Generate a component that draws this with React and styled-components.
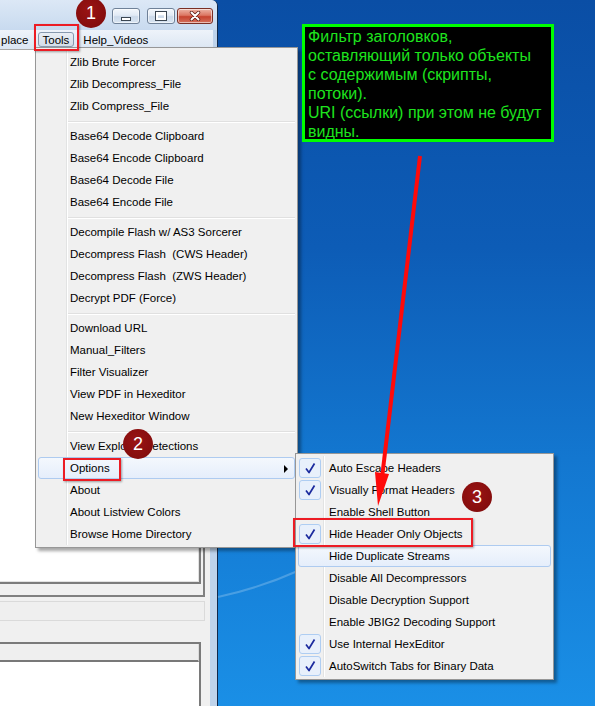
import React from 'react'
import styled, { createGlobalStyle } from 'styled-components'

const GlobalStyle = createGlobalStyle`
  html, body { margin: 0; padding: 0; overflow: hidden; }
  body { font-family: "Liberation Sans", Arial, sans-serif; }
`

const Desktop = styled.div`
  position: relative;
  width: 595px;
  height: 706px;
  overflow: hidden;
  display: flex;
  background: linear-gradient(180deg, #0a4ea5 0%, #0d5cb6 35%, #1377d0 65%, #1a8fe6 100%);
`

const Streak = styled.svg`
  position: absolute;
  left: 0;
  top: 0;
  pointer-events: none;
`

/* ---------- app window ---------- */

const Window = styled.div`
  width: 217px;
  height: 100%;
  display: flex;
  flex-direction: column;
  background: #bed3eb;
  border-right: 1px solid #12294a;
  border-top-right-radius: 6px;
`

const TitleBar = styled.div`
  height: 30px;
  box-sizing: border-box;
  padding: 8px 4px 0 0;
  display: flex;
  justify-content: flex-end;
  align-items: flex-start;
  background: linear-gradient(180deg, #dce8f6 0%, #c8daef 100%);
  border-top-right-radius: 6px;
`

const CaptionButton = styled.div`
  width: ${p => p.$w}px;
  height: 16px;
  margin-left: ${p => p.$gap}px;
  box-sizing: border-box;
  border: 1px solid ${p => (p.$close ? '#7a2f25' : '#6f8198')};
  border-radius: 3px;
  display: flex;
  align-items: center;
  justify-content: center;
  background: ${p =>
    p.$close
      ? 'linear-gradient(180deg,#ecb4a6 0%,#dc7763 45%,#c6432f 55%,#d4715d 100%)'
      : 'linear-gradient(180deg,#f3f7fc 0%,#e1eaf5 45%,#cbd9ea 55%,#d9e5f2 100%)'};
  box-shadow: inset 0 0 0 1px rgba(255, 255, 255, 0.55);
`

const MinGlyph = styled.div`
  width: 8px;
  height: 2px;
  margin-top: 5px;
  background: #fff;
  border: 1px solid #3b4652;
`

const MaxGlyph = styled.div`
  width: 6px;
  height: 3px;
  box-sizing: content-box;
  border: 2px solid #fff;
  border-top-width: 3px;
  outline: 1px solid #3b4652;
`

const MenuBar = styled.div`
  height: 19px;
  margin-right: 4px;
  display: flex;
  align-items: center;
  font-size: 11.5px;
  color: #000;
  background: linear-gradient(180deg, #eef3fa 0%, #dbe6f3 100%);
`

const MenuBarItem = styled.div`
  height: 15px;
  display: flex;
  align-items: center;
  box-sizing: border-box;
  margin-left: ${p => p.$gap}px;
  padding: 0 ${p => (p.$open ? 4 : 0)}px;
  border: 1px solid ${p => (p.$open ? '#8799ae' : 'transparent')};
  border-radius: 3px;
  background: ${p => (p.$open ? 'linear-gradient(180deg,#e9eef4,#d3dde8)' : 'transparent')};
`

const Body = styled.div`
  flex: 1;
  display: flex;
  margin-right: 7px;
  background: #f0f0f0;
`

const MainColumn = styled.div`
  width: 205px;
  display: flex;
  flex-direction: column;
`

const GroupBox = styled.div`
  height: 548px;
  box-sizing: border-box;
  display: flex;
  padding: 0 2px 11px 0;
  border-top: 1px solid #a9a9a9;
  border-right: 2px solid #808080;
  border-bottom: 2px solid #808080;
`

const WhitePanel = styled.div`
  flex: 1;
  background: #fff;
  border-right: 2px solid #7c7c7c;
  border-bottom: 2px solid #7c7c7c;
  box-shadow: inset -1px -1px 0 #e2e2e2;
`

const StatusField = styled.div`
  margin-top: 4px;
  height: 18px;
  background: #efefef;
  border: 1px solid #dadada;
  border-left: none;
`

const ListPanel = styled.div`
  margin-top: 21px;
  width: 199px;
  flex: 1;
  display: flex;
  flex-direction: column;
  border-top: 2px solid #7a7a7a;
  border-right: 2px solid #7a7a7a;
`

const ListHeader = styled.div`
  height: 16px;
  background: #efefef;
  border-bottom: 2px solid #787878;
  border-right: 1px solid #dcdcdc;
`

const ListBody = styled.div`
  flex: 1;
  background: #fff;
`

/* ---------- popup menus ---------- */

const Menu = styled.div`
  position: absolute;
  left: ${p => p.$x}px;
  top: ${p => p.$y}px;
  width: ${p => p.$w}px;
  box-sizing: border-box;
  padding: 3px 2px 2px 2px;
  background: #f0f0f0;
  border: 1px solid #979797;
  box-shadow: 3px 3px 3px rgba(0, 0, 0, 0.35);
  font-size: 11.5px;
  color: #000;

  &::before {
    content: '';
    position: absolute;
    top: 2px;
    bottom: 2px;
    left: ${p => p.$gutter}px;
    width: 1px;
    background: #e2e3e3;
    box-shadow: 1px 0 0 #fff;
  }
`

const Item = styled.div`
  position: relative;
  height: 22px;
  box-sizing: border-box;
  display: flex;
  align-items: center;
  padding-left: ${p => p.$indent}px;
  white-space: pre;
  border: 1px solid ${p => (p.$hot ? '#aecbf0' : 'transparent')};
  border-radius: 3px;
  background: ${p => (p.$hot ? 'linear-gradient(180deg,#f4f8fd 0%,#e5eefb 100%)' : 'transparent')};
`

const Separator = styled.div`
  height: 8px;
  display: flex;
  align-items: center;
  padding-left: ${p => p.$indent}px;

  &::after {
    content: '';
    flex: 1;
    height: 1px;
    background: #e0e0e0;
    box-shadow: 0 1px 0 #fff;
  }
`

const SubArrow = styled.div`
  position: absolute;
  right: 6px;
  top: 7px;
  width: 0;
  height: 0;
  border-top: 4px solid transparent;
  border-bottom: 4px solid transparent;
  border-left: 4px solid #000;
`

const CheckBox = styled.div`
  position: absolute;
  left: 0;
  top: 0;
  width: 22px;
  height: 20px;
  box-sizing: border-box;
  border: 1px solid #aecdf2;
  border-radius: 3px;
  background: #e8f0fb;
  display: flex;
  align-items: center;
  justify-content: center;
`

/* ---------- annotations ---------- */

const Note = styled.div`
  position: absolute;
  left: 302px;
  top: 24px;
  width: 252px;
  height: 118px;
  box-sizing: border-box;
  padding: 0 3px;
  border: 3px solid #00ff00;
  background: #000;
  color: #1ee41e;
  font-size: 16px;
  line-height: 19px;
`

const RedFrame = styled.div`
  position: absolute;
  left: ${p => p.$x}px;
  top: ${p => p.$y}px;
  width: ${p => p.$w}px;
  height: ${p => p.$h}px;
  box-sizing: border-box;
  border: 2px solid #ec1c24;
  box-shadow: 1px 1px 2px rgba(0, 0, 0, 0.35);
`

const Marker = styled.div`
  position: absolute;
  left: ${p => p.$x - 15}px;
  top: ${p => p.$y - 15}px;
  width: 30px;
  height: 30px;
  border-radius: 50%;
  background: radial-gradient(circle at 45% 40%, #9a1414 0%, #850d0d 70%, #7a0a0a 100%);
  color: #fff;
  font-size: 18px;
  display: flex;
  align-items: center;
  justify-content: center;
`

const Overlay = styled.svg`
  position: absolute;
  left: 0;
  top: 0;
  pointer-events: none;
`

const toolsItems = [
  'Zlib Brute Forcer',
  'Zlib Decompress_File',
  'Zlib Compress_File',
  '-',
  'Base64 Decode Clipboard',
  'Base64 Encode Clipboard',
  'Base64 Decode File',
  'Base64 Encode File',
  '-',
  'Decompile Flash w/ AS3 Sorcerer',
  'Decompress Flash  (CWS Header)',
  'Decompress Flash  (ZWS Header)',
  'Decrypt PDF (Force)',
  '-',
  'Download URL',
  'Manual_Filters',
  'Filter Visualizer',
  'View PDF in Hexeditor',
  'New Hexeditor Window',
  '-',
  'View Explorer Detections',
  'Options',
  'About',
  'About Listview Colors',
  'Browse Home Directory',
]

const optionItems = [
  { label: 'Auto Escape Headers', checked: true },
  { label: 'Visually Format Headers', checked: true },
  { label: 'Enable Shell Button' },
  { label: 'Hide Header Only Objects', checked: true },
  { label: 'Hide Duplicate Streams', hot: true },
  { label: 'Disable All Decompressors' },
  { label: 'Disable Decryption Support' },
  { label: 'Enable JBIG2 Decoding Support' },
  { label: 'Use Internal HexEditor', checked: true },
  { label: 'AutoSwitch Tabs for Binary Data', checked: true },
]

const Check = () => (
  <svg width="14" height="14" viewBox="0 0 14 14">
    <path d="M3 7.5 L6 11.5 L11.5 2.5" fill="none" stroke="#1b2a9e" strokeWidth="1.7" strokeLinejoin="round" />
  </svg>
)

const CloseGlyph = () => (
  <svg width="12" height="10" viewBox="0 0 12 10">
    <path d="M2.5 1.5 L9.5 8.5 M9.5 1.5 L2.5 8.5" stroke="#5a1a12" strokeWidth="3.4" strokeLinecap="round" />
    <path d="M2.5 1.5 L9.5 8.5 M9.5 1.5 L2.5 8.5" stroke="#fff" strokeWidth="2" strokeLinecap="round" />
  </svg>
)

const App = () => (
  <Desktop>
    <GlobalStyle />
    <Streak width="595" height="706">
      <path d="M218 597 Q260 588 300 570" fill="none" stroke="rgba(255,255,255,0.22)" strokeWidth="2" />
    </Streak>

    <Window>
      <TitleBar>
        <CaptionButton $w={28} $gap={0}><MinGlyph /></CaptionButton>
        <CaptionButton $w={28} $gap={7}><MaxGlyph /></CaptionButton>
        <CaptionButton $w={36} $gap={2} $close><CloseGlyph /></CaptionButton>
      </TitleBar>
      <MenuBar>
        <MenuBarItem $gap={0}>place</MenuBarItem>
        <MenuBarItem $gap={8} $open>Tools</MenuBarItem>
        <MenuBarItem $gap={8}>Help_Videos</MenuBarItem>
      </MenuBar>
      <Body>
        <MainColumn>
          <GroupBox><WhitePanel /></GroupBox>
          <StatusField />
          <ListPanel>
            <ListHeader />
            <ListBody />
          </ListPanel>
        </MainColumn>
      </Body>
    </Window>

    <Menu $x={35} $y={47} $w={263} $gutter={30}>
      {toolsItems.map((label, i) =>
        label === '-' ? (
          <Separator key={i} $indent={29} />
        ) : (
          <Item key={i} $indent={31} $hot={label === 'Options'}>
            {label}
            {label === 'Options' && <SubArrow />}
          </Item>
        )
      )}
    </Menu>

    <Menu $x={295} $y={453} $w={259} $gutter={27}>
      {optionItems.map(o => (
        <Item key={o.label} $indent={30} $hot={o.hot}>
          {o.checked && <CheckBox><Check /></CheckBox>}
          {o.label}
        </Item>
      ))}
    </Menu>

    <Note>
      Фильтр заголовков,<br />
      оставляющий только объекты<br />
      с содержимым (скрипты,<br />
      потоки).<br />
      URI (ссылки) при этом не будут<br />
      видны.
    </Note>

    <Overlay width="595" height="706">
      <line x1="420" y1="156" x2="382" y2="478" stroke="#ff0a0a" strokeWidth="4" />
      <polygon points="378,506 389,474 375,472" fill="#ff0a0a" />
    </Overlay>

    <RedFrame $x={34} $y={24} $w={45} $h={27} />
    <RedFrame $x={63} $y={458} $w={58} $h={23} />
    <RedFrame $x={293} $y={518} $w={180} $h={29} />

    <Marker $x={91} $y={13}>1</Marker>
    <Marker $x={138} $y={444}>2</Marker>
    <Marker $x={477} $y={497}>3</Marker>
  </Desktop>
)

export default App
